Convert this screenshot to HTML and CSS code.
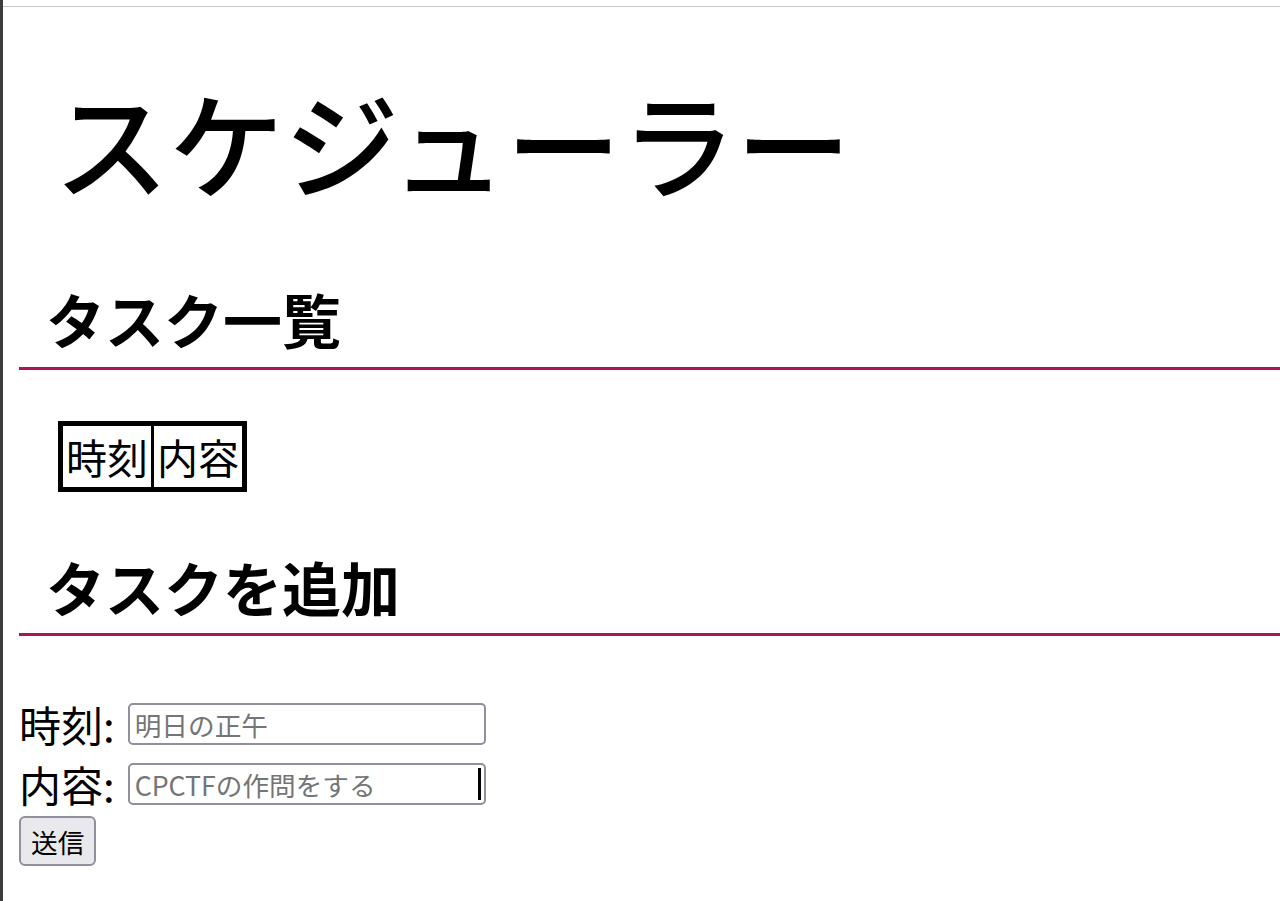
FILE: index.html
```html
<!DOCTYPE html>
<html lang="ja">
<head>
<meta charset="utf-8">
<title>スケジューラー</title>
<link rel="stylesheet" href="styles.css">
</head>
<body>
<div class="frame">
  <div class="chrome"></div>
  <main class="page">
    <h1 class="title">スケジューラー</h1>
    <section class="section">
      <h2 class="section-title">タスク一覧</h2>
      <table class="tasks">
        <thead>
          <tr><th class="cell">時刻</th><th class="cell">内容</th></tr>
        </thead>
      </table>
    </section>
    <section class="section">
      <h2 class="section-title">タスクを追加</h2>
      <form class="add-form">
        <div class="row">
          <label class="label" for="time">時刻:</label>
          <input class="field" id="time" type="text" placeholder="明日の正午">
        </div>
        <div class="row">
          <label class="label" for="content">内容:</label>
          <span class="field-wrap">
            <input class="field" id="content" type="text" placeholder="CPCTFの作問をする">
            <span class="caret"></span>
          </span>
        </div>
        <button class="submit" type="button">送信</button>
      </form>
    </section>
  </main>
</div>
</body>
</html>
```

FILE: styles.css
```css
html, body {
  margin: 0;
  padding: 0;
  background: #ffffff;
}

body {
  font-family: "Noto Sans CJK JP", "Noto Sans", sans-serif;
  color: #000000;
}

.frame {
  min-height: 901px;
  border-left: 3px solid #3d3d3d;
  display: flex;
  flex-direction: column;
}

.chrome {
  height: 6px;
  border-bottom: 1px solid #c8c8c8;
  flex: none;
}

.page {
  padding-left: 16px;
}

.title {
  font-size: 115px;
  font-weight: 500;
  line-height: 165px;
  margin: 51px 0 0;
  padding-left: 35px;
}

.section-title {
  font-size: 59px;
  font-weight: bold;
  line-height: 87px;
  margin: 52px 0 0;
  padding: 0 0 5px 27px;
  border-bottom: 3px solid #ad1457;
}

.section + .section .section-title {
  margin-top: 49px;
  padding-top: 2px;
  padding-bottom: 3px;
}

.tasks {
  border-collapse: collapse;
  border: 5px solid #000000;
  margin: 51px 0 0 39px;
}

.cell {
  border: 3px solid #000000;
  font-size: 41px;
  font-weight: normal;
  line-height: 57px;
  padding: 2px 3px;
}

.add-form {
  margin-top: 58px;
  display: flex;
  flex-direction: column;
  align-items: flex-start;
}

.row {
  height: 60px;
  display: flex;
  align-items: center;
  gap: 13px;
}

.label {
  font-size: 42px;
  font-weight: normal;
  line-height: 58px;
}

.field-wrap {
  position: relative;
  display: inline-flex;
}

.field {
  box-sizing: border-box;
  width: 358px;
  height: 42px;
  border: 2px solid #8f8f9d;
  border-radius: 5px;
  padding: 0 5px;
  font-family: "Noto Sans CJK JP", "Noto Sans", sans-serif;
  font-size: 26.67px;
  color: #000000;
  background: #ffffff;
}

.field::placeholder {
  color: #757575;
  opacity: 1;
}

.caret {
  position: absolute;
  left: 350px;
  top: 5px;
  width: 3px;
  height: 32px;
  background: #000000;
}

.submit {
  margin-top: 2px;
  box-sizing: border-box;
  height: 50px;
  padding: 0 10px;
  border: 2px solid #8f8f9d;
  border-radius: 6px;
  background: #e9e9ed;
  font-family: "Noto Sans CJK JP", "Noto Sans", sans-serif;
  font-size: 26.67px;
  color: #000000;
}
```
